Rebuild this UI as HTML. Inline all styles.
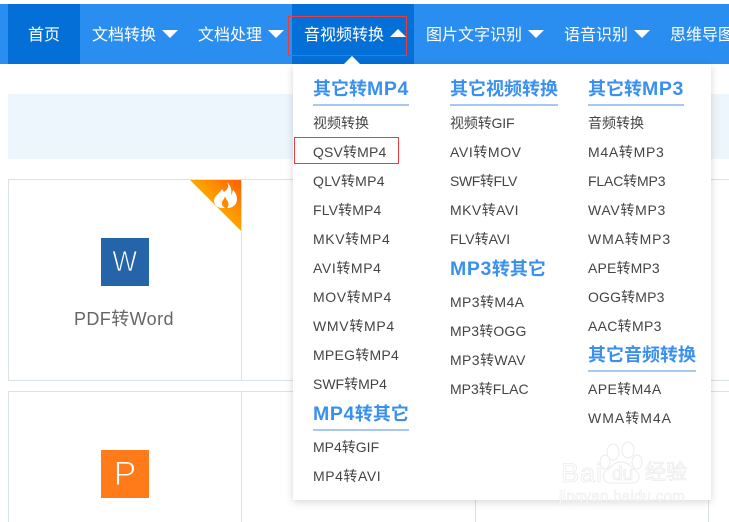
<!DOCTYPE html>
<html><head><meta charset="utf-8">
<style>
html,body{margin:0;padding:0;background:#fff}
body{width:729px;height:522px;overflow:hidden;position:relative;font-family:"Liberation Sans","Noto Sans CJK SC",sans-serif}
.a{position:absolute}
.n{position:absolute;top:6px;height:60px;line-height:60px;color:#fff;font-size:16px;white-space:nowrap}
.t{position:absolute;width:0;height:0;border-left:8px solid transparent;border-right:8px solid transparent}
.d{border-top:8px solid #fff;top:30px}
.h{position:absolute;font-size:18px;font-weight:bold;color:#3a90ee;white-space:nowrap;line-height:24px;height:27px;border-bottom:2px solid #a6c8f5;box-sizing:content-box;padding-top:2px}
.h b{font-size:19.5px;letter-spacing:.6px}
.i{position:absolute;font-size:14px;color:#444;white-space:nowrap;line-height:20px}
.g{position:absolute;background:#d9e2e6}
.w{position:absolute;color:#fff;-webkit-text-stroke:.8px #ebebeb;white-space:nowrap}
</style></head><body>
<div class="a" style="left:0;top:4px;width:729px;height:60px;background:#2a8ef0"></div>
<div class="a" style="left:8px;top:4px;width:72px;height:60px;background:#056fd8"></div>
<div class="a" style="left:292px;top:4px;width:122px;height:60px;background:#056fd8"></div>
<div class="n" style="left:28px">首页</div>
<div class="n" style="left:92px">文档转换</div><div class="t d" style="left:162px"></div>
<div class="n" style="left:198px">文档处理</div><div class="t d" style="left:268px"></div>
<div class="n" style="left:304px">音视频转换</div><div class="t" style="left:390px;top:29px;border-bottom:8px solid #fff"></div>
<div class="n" style="left:426px">图片文字识别</div><div class="t d" style="left:528px"></div>
<div class="n" style="left:564px">语音识别</div><div class="t d" style="left:634px"></div>
<div class="n" style="left:670px">思维导图</div>
<div class="a" style="left:288px;top:16px;width:117px;height:38px;border:1px solid #ee3b3b"></div>

<div class="a" style="left:8px;top:94px;width:721px;height:65px;background:#edf6fd"></div>

<div class="g" style="left:8px;top:179px;width:721px;height:1px"></div>
<div class="g" style="left:8px;top:391px;width:721px;height:1px"></div>
<div class="g" style="left:8px;top:179px;width:1px;height:343px"></div>
<div class="g" style="left:241px;top:179px;width:1px;height:343px"></div>
<div class="g" style="left:475px;top:179px;width:1px;height:343px"></div>
<div class="g" style="left:708px;top:179px;width:1px;height:343px"></div>
<div class="a" style="left:8px;top:381px;width:721px;height:10px;background:#fff"></div>
<div class="g" style="left:8px;top:380px;width:721px;height:1px"></div>

<svg class="a" style="left:190px;top:180px" width="51" height="51" viewBox="0 0 51 51">
<defs><linearGradient id="f" x1=".45" y1=".55" x2="1" y2="0"><stop offset="0" stop-color="#ffad00"/><stop offset="1" stop-color="#ff5f00"/></linearGradient></defs>
<polygon points="0,0 51,0 51,51" fill="url(#f)"/>
<path d="M37 2C40 7 37 10 34 12L32 9C30 13 24 16 24 21C24 25 28 28 32 28L39 28C44 27 47 24 47 19C47 15 45 12 43 10C42 13 42 14 41 15C42 10 41 6 37 2Z" fill="#fff"/>
<path d="M35 16C35 19 31 21 32 24C32 26 34 27 35 28L37 28C39 26 39 23 37 20C36 19 36 18 35 16Z" fill="#ff8a00"/>
</svg>

<div class="a" style="left:101px;top:238px;width:48px;height:48px;background:#2564a9;color:#fff;font-size:29px;line-height:48px;text-align:center;-webkit-text-stroke:.8px #2564a9;"><span style="display:inline-block;transform:scaleX(.9)">W</span></div>
<div class="a" style="left:74px;top:307px;font-size:18px;line-height:24px;color:#666;white-space:nowrap;letter-spacing:.4px">PDF转Word</div>
<div class="a" style="left:101px;top:450px;width:48px;height:48px;background:#ff7a18;color:#fff;font-size:34px;line-height:48px;text-align:center;-webkit-text-stroke:1px #ff7a18">P</div>

<div class="a" style="left:293px;top:64px;width:418px;height:436px;background:#fff;box-shadow:0 2px 8px rgba(0,0,0,.16)"></div>
<div class="t" style="left:344px;top:56px;border-bottom:8px solid #fff"></div>

<div class="h" style="left:313px;top:75px;width:96px">其它转<b>MP4</b></div>
<div class="i" style="left:313px;top:113px">视频转换</div>
<div class="i" style="left:313px;top:142px;letter-spacing:.15px">QSV转MP4</div>
<div class="i" style="left:313px;top:171px;letter-spacing:.3px">QLV转MP4</div>
<div class="i" style="left:313px;top:200px;letter-spacing:.15px">FLV转MP4</div>
<div class="i" style="left:313px;top:229px;letter-spacing:.6px">MKV转MP4</div>
<div class="i" style="left:313px;top:258px;letter-spacing:.6px">AVI转MP4</div>
<div class="i" style="left:313px;top:287px;letter-spacing:.6px">MOV转MP4</div>
<div class="i" style="left:313px;top:316px;letter-spacing:.7px">WMV转MP4</div>
<div class="i" style="left:313px;top:345px;letter-spacing:.25px">MPEG转MP4</div>
<div class="i" style="left:313px;top:374px">SWF转MP4</div>
<div class="h" style="left:313px;top:400px;width:96px"><b>MP4</b>转其它</div>
<div class="i" style="left:313px;top:437px">MP4转GIF</div>
<div class="i" style="left:313px;top:466px;letter-spacing:.55px">MP4转AVI</div>

<div class="h" style="left:450px;top:75px;width:108px">其它视频转换</div>
<div class="i" style="left:450px;top:113px;letter-spacing:-.15px">视频转GIF</div>
<div class="i" style="left:450px;top:142px;letter-spacing:.6px">AVI转MOV</div>
<div class="i" style="left:450px;top:171px;letter-spacing:-.4px">SWF转FLV</div>
<div class="i" style="left:450px;top:200px;letter-spacing:.45px">MKV转AVI</div>
<div class="i" style="left:450px;top:229px">FLV转AVI</div>
<div class="h" style="left:450px;top:255px;width:96px;border-bottom:none"><b>MP3</b>转其它</div>
<div class="i" style="left:450px;top:292px;letter-spacing:.4px">MP3转M4A</div>
<div class="i" style="left:450px;top:321px;letter-spacing:.15px">MP3转OGG</div>
<div class="i" style="left:450px;top:350px;letter-spacing:.4px">MP3转WAV</div>
<div class="i" style="left:450px;top:379px">MP3转FLAC</div>

<div class="h" style="left:588px;top:75px;width:96px">其它转<b>MP3</b></div>
<div class="i" style="left:588px;top:113px">音频转换</div>
<div class="i" style="left:588px;top:142px;letter-spacing:.7px">M4A转MP3</div>
<div class="i" style="left:588px;top:171px;letter-spacing:-.15px">FLAC转MP3</div>
<div class="i" style="left:588px;top:200px;letter-spacing:.7px">WAV转MP3</div>
<div class="i" style="left:588px;top:229px;letter-spacing:.85px">WMA转MP3</div>
<div class="i" style="left:588px;top:258px;letter-spacing:.15px">APE转MP3</div>
<div class="i" style="left:588px;top:287px;letter-spacing:.15px">OGG转MP3</div>
<div class="i" style="left:588px;top:316px;letter-spacing:.3px">AAC转MP3</div>
<div class="h" style="left:588px;top:341px;width:108px">其它音频转换</div>
<div class="i" style="left:588px;top:379px;letter-spacing:.4px">APE转M4A</div>
<div class="i" style="left:588px;top:408px;letter-spacing:1px">WMA转M4A</div>

<div class="a" style="left:294px;top:137px;width:103px;height:25px;border:1px solid #ee3b3b"></div>

<svg class="a" style="left:595px;top:440px" width="50" height="50" viewBox="0 0 50 50" fill="#fff" stroke="#ebebeb" stroke-width="1">
<ellipse cx="10" cy="22" rx="5" ry="7"/><ellipse cx="18" cy="12" rx="6" ry="8"/><ellipse cx="33" cy="10" rx="6" ry="8"/><ellipse cx="42" cy="22" rx="5" ry="7"/>
<path d="M26 22C18 22 16 28 11 31C6 34 8 43 15 43L38 43C45 43 46 34 41 31C36 28 34 22 26 22Z"/>
</svg>
<div class="w" style="left:561px;top:458px;font-size:27px;line-height:30px;letter-spacing:1px">Bai</div>
<div class="w" style="left:612px;top:463px;font-size:19px;line-height:24px">du</div>
<div class="w" style="left:645px;top:461px;font-size:21px;line-height:24px">经验</div>
<div class="w" style="left:559px;top:488px;font-size:15px;line-height:18px;letter-spacing:.3px;-webkit-text-stroke:.6px #ebebeb">jingyan.baidu.com</div>
</body></html>
